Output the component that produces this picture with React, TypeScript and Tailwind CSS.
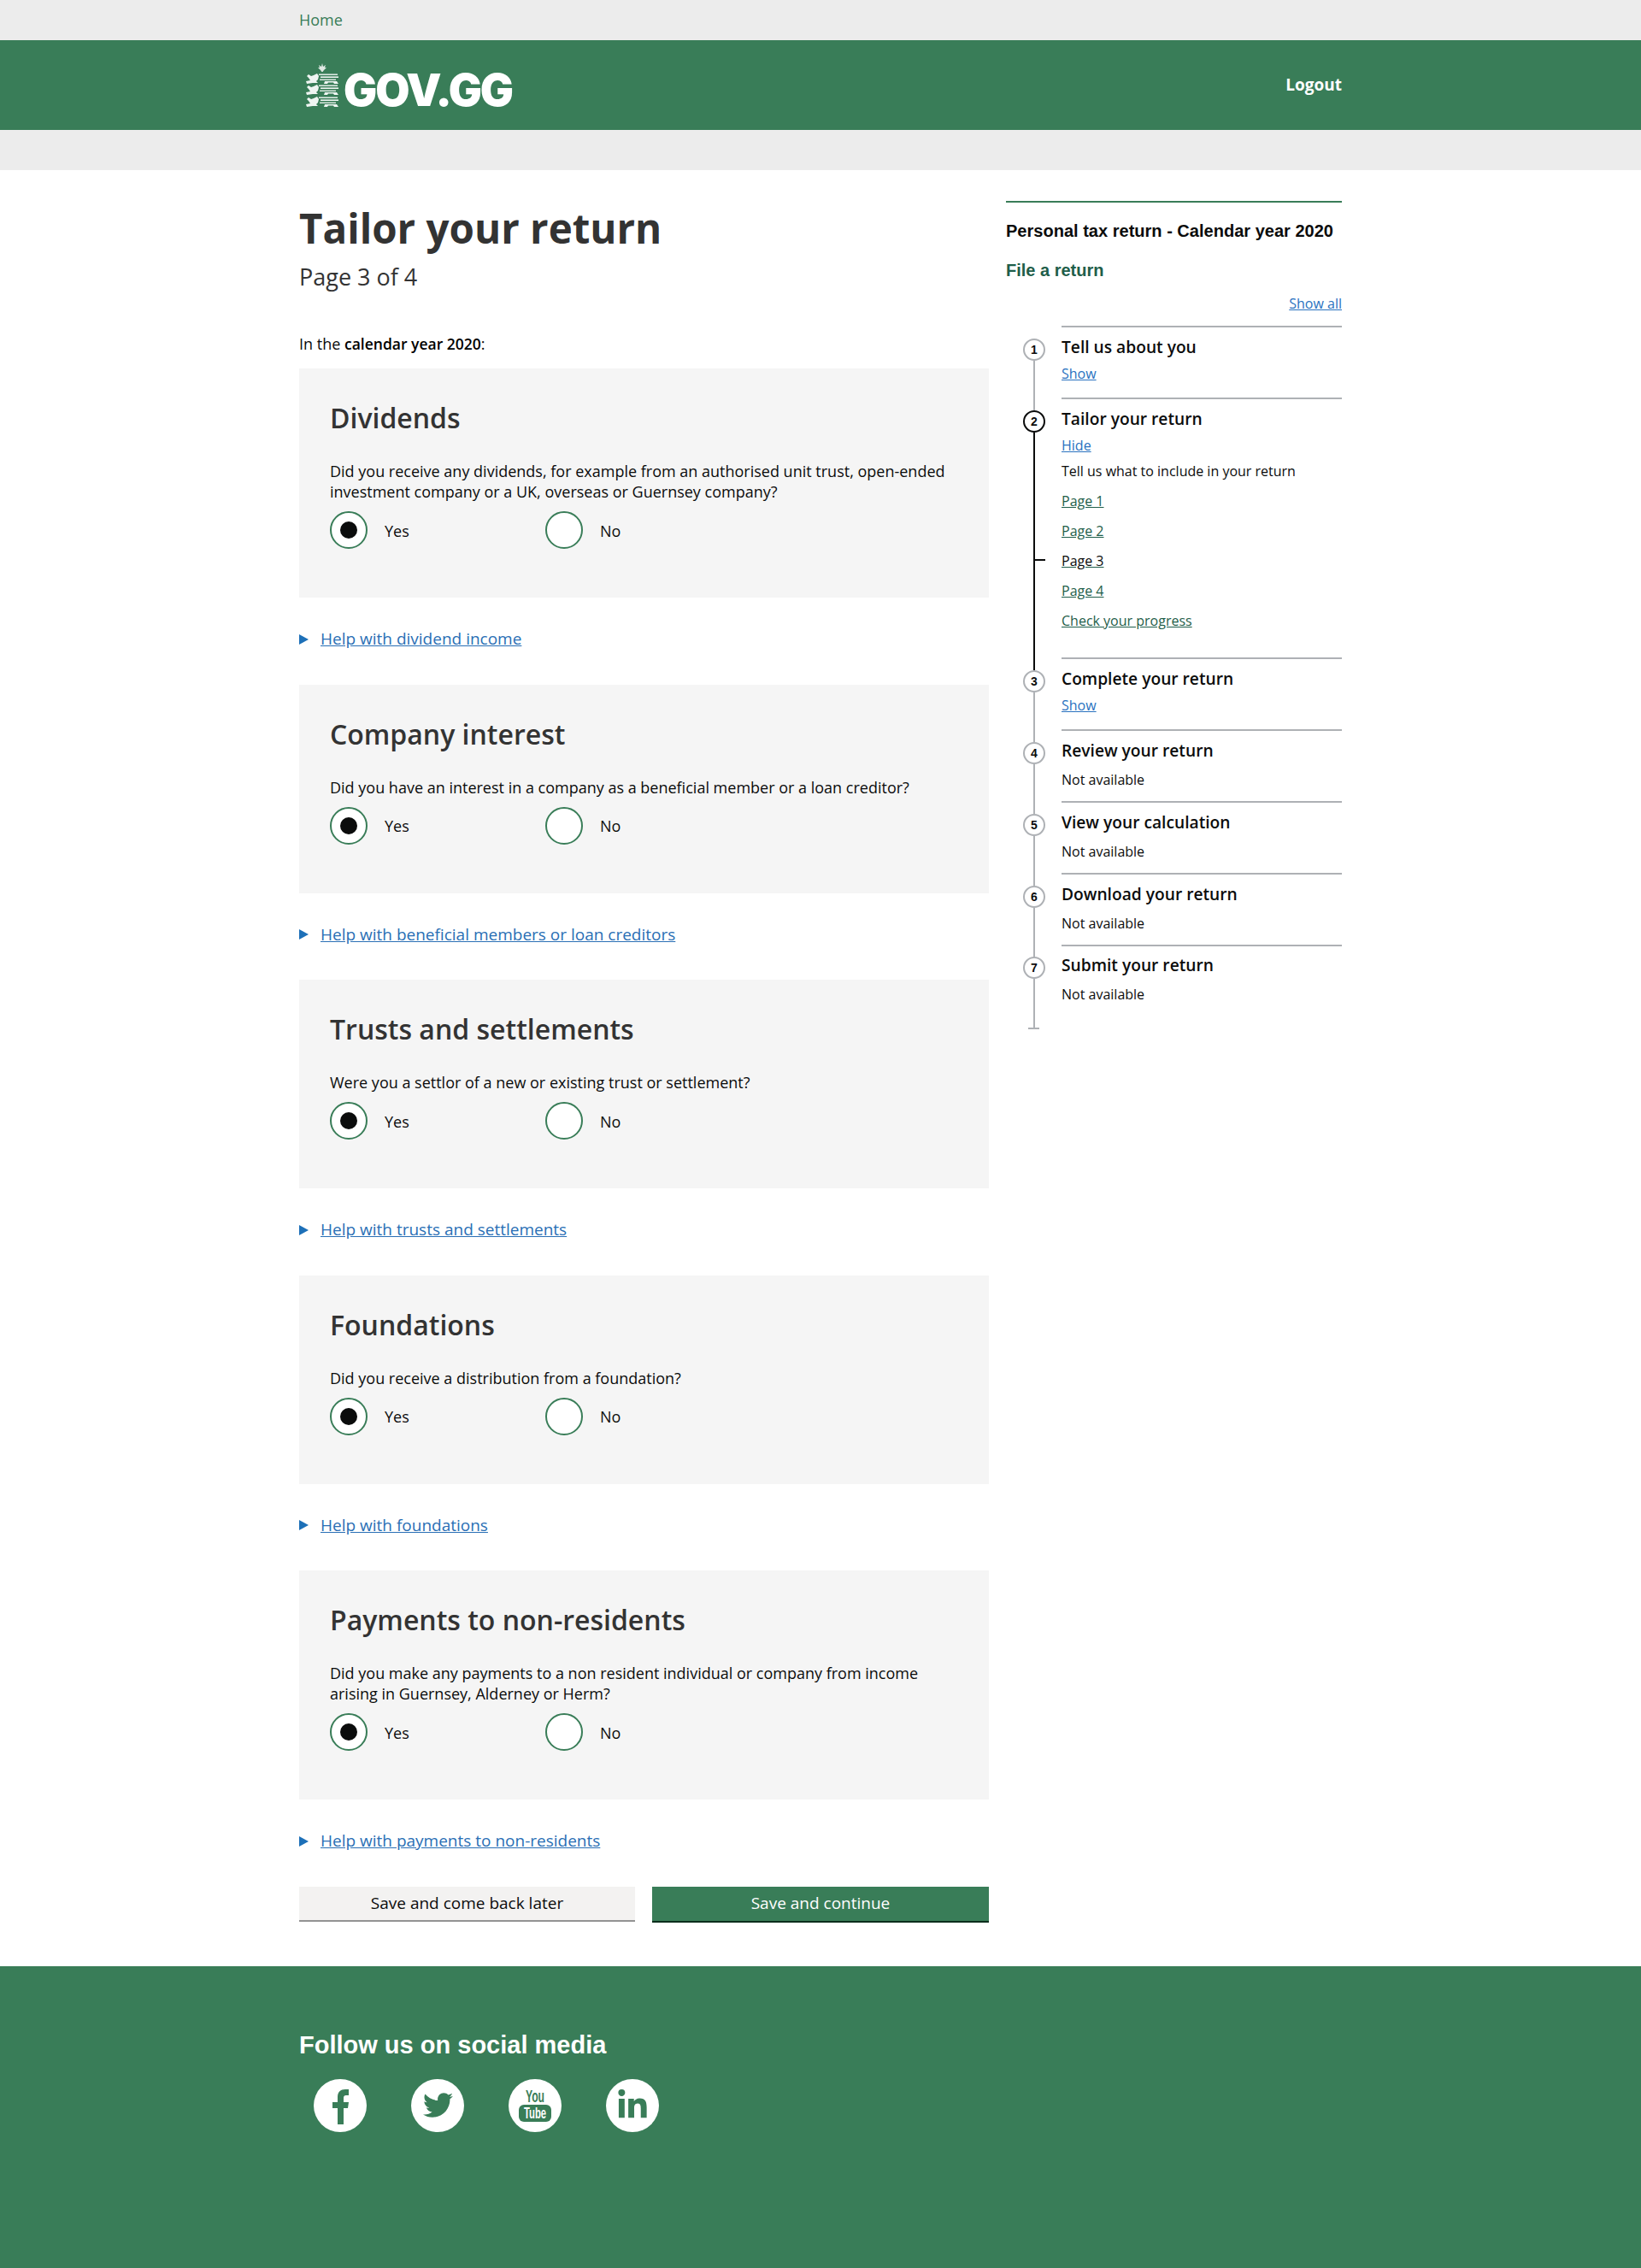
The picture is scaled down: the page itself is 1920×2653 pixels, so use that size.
import React from "react";
import { FaLinkedinIn, FaTwitter } from "react-icons/fa";

const questions = [
  {
    title: "Dividends",
    text: "Did you receive any dividends, for example from an authorised unit trust, open-ended investment company or a UK, overseas or Guernsey company?",
    help: "Help with dividend income",
  },
  {
    title: "Company interest",
    text: "Did you have an interest in a company as a beneficial member or a loan creditor?",
    help: "Help with beneficial members or loan creditors",
  },
  {
    title: "Trusts and settlements",
    text: "Were you a settlor of a new or existing trust or settlement?",
    help: "Help with trusts and settlements",
  },
  {
    title: "Foundations",
    text: "Did you receive a distribution from a foundation?",
    help: "Help with foundations",
  },
  {
    title: "Payments to non-residents",
    text: "Did you make any payments to a non resident individual or company from income arising in Guernsey, Alderney or Herm?",
    help: "Help with payments to non-residents",
  },
];

const Lion = ({ y }: { y: number }) => (
  <g transform={`translate(0 ${y})`} fill="#fff" fillOpacity="0.92">
    <path d="M0 9 L5 8 L3 5 L1 3 L3 1 L6 3 L9 2 L13 0 L15 3 L14 7 L12 9 L14 11 L8 11 L1 12 Z" />
    <rect x="15" y="0.5" width="22" height="1.4" />
    <rect x="17" y="3.4" width="21" height="1.6" />
    <rect x="16" y="6.6" width="19" height="1.3" />
    <path d="M22 9 H36 L38 12 H33 L32 10.5 H26 L25 12 H21 Z" />
  </g>
);

const Logo = () => (
  <div className="flex items-end">
    <svg width="38" height="52" viewBox="0 0 38 52" className="mr-[6px]">
      <path
        d="M19 0 L20 4 L23 2 L22 5 L24 5 L21 8 L19.6 10 L18.4 10 L17 8 L14 5 L16 5 L15 2 L18 4 Z"
        fill="#dfe9e3"
      />
      <Lion y={12} />
      <Lion y={25} />
      <Lion y={39} />
    </svg>
    <span className="font-['Inter',sans-serif] text-[52px] leading-[40px] font-black tracking-[-2px] text-white">
      GOV.GG
    </span>
  </div>
);

const Radio = ({ label, checked }: { label: string; checked?: boolean }) => (
  <div className="flex w-[252px] items-center">
    <div className="flex h-[44px] w-[44px] items-center justify-center rounded-full border-2 border-[#397d58] bg-white">
      {checked && <div className="h-[20px] w-[20px] rounded-full bg-[#0b0c0c]" />}
    </div>
    <span className="ml-[20px] pt-[2px] text-[18px] leading-[25px] text-[#0b0c0c]">{label}</span>
  </div>
);

const QuestionCard = ({ title, text, help }: { title: string; text: string; help: string }) => (
  <div>
    <div className="bg-[#f5f5f5] px-[36px] pt-[38px] pb-[57px]">
      <h2 className="text-[32px] leading-[40px] font-semibold text-[#333]">{title}</h2>
      <p className="mt-[30px] text-[18px] leading-[24px] text-[#0b0c0c]">{text}</p>
      <div className="mt-[11px] flex">
        <Radio label="Yes" checked />
        <Radio label="No" />
      </div>
    </div>
    <div className="mt-[36px] mb-[40.5px] flex h-[25px] items-center">
      <span className="h-0 w-0 border-y-[6.5px] border-l-[11px] border-y-transparent border-l-[#1d70b8]" />
      <a href="#" className="ml-[14px] text-[19px] leading-[25px] text-[#2a6fb5] underline">
        {help}
      </a>
    </div>
  </div>
);

const Step = ({
  n,
  title,
  active,
  last,
  children,
}: {
  n: number;
  title: string;
  active?: boolean;
  last?: boolean;
  children: React.ReactNode;
}) => (
  <div className="relative pl-[65px]">
    <div
      className={`absolute left-[32px] w-[2px] ${active ? "bg-[#0b0c0c]" : "bg-[#aeb1b5]"} ${
        last ? "top-[40px] bottom-0" : "top-[41px] bottom-[-15px]"
      }`}
    />
    <div
      className={`absolute left-[20px] flex h-[26px] w-[26px] items-center justify-center rounded-full border-2 bg-white font-['Liberation_Sans',sans-serif] text-[14px] font-bold text-[#0b0c0c] ${
        active ? "border-[#0b0c0c]" : "border-[#aeb1b5]"
      } ${last ? "top-[14px]" : "top-[15px]"}`}
    >
      {n}
    </div>
    <div className={`border-t-2 border-[#aeb1b5] ${last ? "pt-[9px]" : "pt-[10px]"}`}>
      <h3 className="text-[19.2px] leading-[26px] font-semibold text-[#0b0c0c]">{title}</h3>
      {children}
    </div>
    {last && <div className="absolute bottom-[-2px] left-[26px] h-[2px] w-[13px] bg-[#aeb1b5]" />}
  </div>
);

const ShowLink = () => (
  <div className="pt-[8px] pb-[18px]">
    <a href="#" className="block text-[16px] leading-[20px] text-[#2a72bf] underline">
      Show
    </a>
  </div>
);

const NotAvailable = ({ pb = "pb-[15px]" }: { pb?: string }) => (
  <div className={`pt-[11px] ${pb}`}>
    <p className="text-[16px] leading-[20px] text-[#0b0c0c]">Not available</p>
  </div>
);

const Sidebar = () => (
  <aside className="mt-[36px] w-[393px]">
    <div className="h-[2px] bg-[#397d58]" />
    <h2 className="mt-[21px] font-['Liberation_Sans',sans-serif] text-[20.05px] leading-[24px] font-bold text-[#0b0c0c]">
      Personal tax return - Calendar year 2020
    </h2>
    <h3 className="mt-[22px] font-['Liberation_Sans',sans-serif] text-[20px] leading-[24px] font-bold text-[#1f5e4a]">
      File a return
    </h3>
    <div className="mt-[17px] mb-[16px] text-right text-[16px] leading-[20px]">
      <a href="#" className="text-[#2a72bf] underline">
        Show all
      </a>
    </div>
    <Step n={1} title="Tell us about you">
      <ShowLink />
    </Step>
    <Step n={2} title="Tailor your return" active>
      <a href="#" className="mt-[8px] block text-[16px] leading-[20px] text-[#2a72bf] underline">
        Hide
      </a>
      <p className="mt-[10px] text-[16px] leading-[20px] text-[#0b0c0c]">Tell us what to include in your return</p>
      <ul className="mt-[15px] flex flex-col gap-[15px] pb-[33px] text-[16px] leading-[20px] text-[#1f5e4a] underline">
        <li>Page 1</li>
        <li>Page 2</li>
        <li className="relative text-[#0b0c0c]">
          Page 3
          <span className="absolute top-[8px] left-[-32px] h-[2px] w-[13px] bg-[#0b0c0c]" />
        </li>
        <li>Page 4</li>
        <li>Check your progress</li>
      </ul>
    </Step>
    <Step n={3} title="Complete your return">
      <ShowLink />
    </Step>
    <Step n={4} title="Review your return">
      <NotAvailable />
    </Step>
    <Step n={5} title="View your calculation">
      <NotAvailable />
    </Step>
    <Step n={6} title="Download your return">
      <NotAvailable />
    </Step>
    <Step n={7} title="Submit your return" last>
      <NotAvailable pb="pb-[29px]" />
    </Step>
  </aside>
);

const SocialCircle = ({ children }: { children: React.ReactNode }) => (
  <div className="flex h-[62px] w-[62px] items-center justify-center rounded-full bg-white text-[#397d58]">
    {children}
  </div>
);

const FacebookMark = () => (
  <svg width="19" height="41" viewBox="0 0 19 41" fill="currentColor" className="mt-[3px]">
    <path d="M6 41 V22 H0 V15 H6 V9 C6 3 9.5 0 15 0 H19 V7 H16 C13.5 7 13 8.5 13 10 V15 H19 L18 22 H13 V41 Z" />
  </svg>
);

const YouTubeMark = () => (
  <svg width="38" height="52" viewBox="0 -6 38 52">
    <text
      transform="translate(19 16) scale(1 1.7)"
      textAnchor="middle"
      fontFamily="Liberation Sans"
      fontWeight="700"
      fontSize="12.2"
      fill="#397d58"
    >
      You
    </text>
    <rect x="0" y="19" width="38" height="20" rx="6" fill="#397d58" />
    <text
      transform="translate(19 35) scale(1 1.6)"
      textAnchor="middle"
      fontFamily="Liberation Sans"
      fontWeight="700"
      fontSize="11.3"
      fill="#fff"
    >
      Tube
    </text>
  </svg>
);

export default function App() {
  return (
    <div className="min-h-[2653px] bg-white font-['Open_Sans',sans-serif]">
      <div className="h-[47px] bg-[#ececec]">
        <div className="mx-auto w-[1220px] pt-[11px] text-[18px] leading-[25px] text-[#397d58]">Home</div>
      </div>
      <header className="h-[105px] bg-[#397d58]">
        <div className="mx-auto flex h-full w-[1220px] items-center justify-between">
          <div className="pl-[8px]">
            <Logo />
          </div>
          <a href="#" className="text-[19px] leading-[25px] font-bold text-white">
            Logout
          </a>
        </div>
      </header>
      <div className="h-[47px] bg-[#ececec]" />

      <div className="mx-auto flex w-[1220px] justify-between">
        <main className="w-[807px] pt-[38px]">
          <h1 className="text-[47.5px] leading-[60px] font-bold text-[#333]">Tailor your return</h1>
          <p className="mt-[10px] text-[27px] leading-[34px] text-[#333]">Page 3 of 4</p>
          <p className="mt-[49px] mb-[16px] text-[18px] leading-[25px] text-[#0b0c0c]">
            In the <strong className="text-[17.5px] font-semibold text-black">calendar year 2020</strong>:
          </p>
          {questions.map((q) => (
            <QuestionCard key={q.title} title={q.title} text={q.text} help={q.help} />
          ))}
          <div className="flex justify-between">
            <button className="h-[41px] w-[393px] border-b-2 border-[#939393] bg-[#f3f2f1] text-[19px] text-[#0b0c0c]">
              Save and come back later
            </button>
            <button className="h-[42px] w-[394px] border-b-2 border-[#0b2e1c] bg-[#397d58] text-[19px] text-white">
              Save and continue
            </button>
          </div>
        </main>
        <Sidebar />
      </div>

      <footer className="mt-[51px] h-[354px] bg-[#397d58]">
        <div className="mx-auto w-[1220px] pt-[76px]">
          <h2 className="font-['Liberation_Sans',sans-serif] text-[29px] leading-[32px] font-bold text-white">
            Follow us on social media
          </h2>
          <div className="mt-[24px] flex gap-[52px] pl-[17px]">
            <SocialCircle>
              <FacebookMark />
            </SocialCircle>
            <SocialCircle>
              <FaTwitter size={35} />
            </SocialCircle>
            <SocialCircle>
              <YouTubeMark />
            </SocialCircle>
            <SocialCircle>
              <FaLinkedinIn size={38} />
            </SocialCircle>
          </div>
        </div>
      </footer>
    </div>
  );
}
